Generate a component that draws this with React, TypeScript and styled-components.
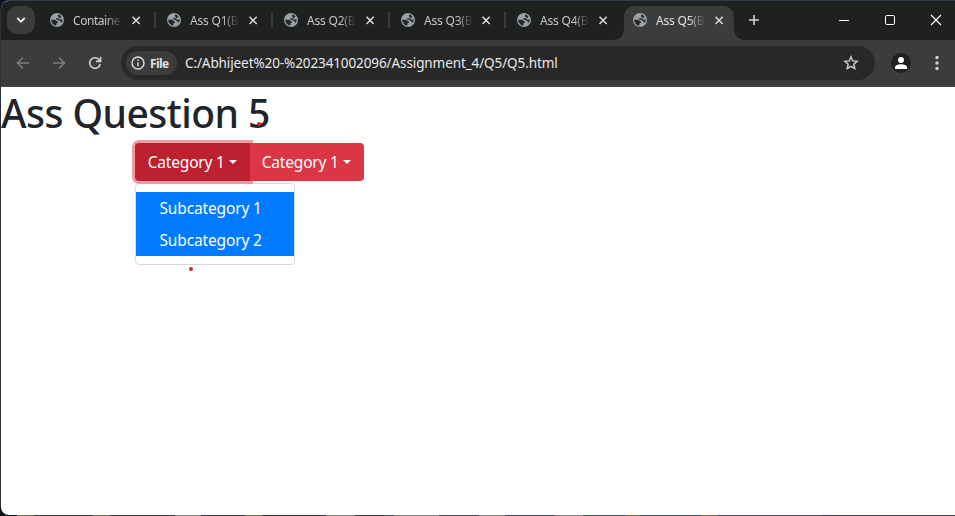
import React from "react";
import styled, { createGlobalStyle, css } from "styled-components";

const Global = createGlobalStyle`
  * { box-sizing: border-box; }
  html, body { margin: 0; padding: 0; overflow: hidden; }
  body { font-family: "Open Sans", "Noto Sans", sans-serif; }
  svg { display: block; flex: none; }
`;

const Desktop = styled.div`
  width: 955px;
  height: 516px;
  padding: 0 0 1px 1px;
  display: flex;
  background:
    linear-gradient(90deg,
      #101624 0 17px, #737033 17px 34px, #353743 34px 93px, #737033 93px 110px,
      #353743 110px 175px, #858585 175px 201px, #353743 201px 245px, #7c7037 245px 262px,
      #35333f 262px 326px, #85817f 326px 355px, #3a343c 355px 384px, #394d82 384px 394px,
      #85817f 394px 439px, #3b4582 439px 479px, #85817f 479px 505px, #3c4180 505px 555px,
      #85817f 555px 583px, #3b5084 583px 625px, #7c7037 625px 640px, #3f4d80 640px 701px,
      #7c7037 701px 718px, #424d84 718px 822px, #30397c 822px) 0 515px / 955px 1px no-repeat,
    linear-gradient(#0b1424 0 8px, #2b2e3b 8px 507px, #0c111d 507px);
`;

const Window = styled.div`
  flex: 1;
  display: flex;
  flex-direction: column;
  overflow: hidden;
  border-top: 1px solid #303c4c;
  border-radius: 8px 0 0 8px;
  background: #fff;
`;

const TabStrip = styled.div`
  flex: none;
  height: 39px;
  display: flex;
  background: #1f2120;
`;

const TabSearch = styled.div`
  width: 28px;
  height: 28px;
  margin: 5px 4px 0 6px;
  border-radius: 10px;
  background: #3c3c3c;
  display: grid;
  place-items: center;
`;

const Tab = styled.div<{ $active?: boolean; $wide?: boolean }>`
  position: relative;
  width: ${(p) => (p.$wide ? 117 : 116)}px;
  height: 34px;
  margin-top: 5px;
  padding: 0 0 6px 11px;
  display: flex;
  align-items: center;
  color: #c7c7c7;
  ${(p) =>
    p.$active &&
    css`
      width: 110px;
      margin-left: 2px;
      padding-left: 9px;
      background: #3c3c3c;
      border-radius: 10px 10px 0 0;
      color: #e3e3e3;
      &::before,
      &::after {
        content: "";
        position: absolute;
        bottom: 0;
        width: 10px;
        height: 10px;
      }
      &::before {
        left: -10px;
        background: radial-gradient(circle at 0 0, transparent 9.5px, #3c3c3c 10px);
      }
      &::after {
        right: -10px;
        background: radial-gradient(circle at 100% 0, transparent 9.5px, #3c3c3c 10px);
      }
    `}
`;

const TabTitle = styled.div<{ $tight?: boolean }>`
  width: 50px;
  margin: 1px 9px 0 9px;
  white-space: nowrap;
  font-family: "Noto Sans", "Open Sans", sans-serif;
  font-size: 12px;
  line-height: 18px;
  letter-spacing: ${(p) => (p.$tight ? "-0.45px" : "-0.2px")};
  mask-image: linear-gradient(90deg, #000 33px, transparent 49px);
`;

const Separator = styled.div`
  width: 2px;
  height: 16px;
  margin-left: 13px;
  background: #3a3b3b;
`;

const NewTab = styled.div`
  margin: 13px 0 0 14px;
`;

const WindowControls = styled.div`
  margin: 13px 13px 0 auto;
  display: flex;
  gap: 34px;
`;

const Toolbar = styled.div`
  flex: none;
  height: 47px;
  display: flex;
  align-items: center;
  padding-left: 14px;
  background: #3c3c3c;
  border-bottom: 1px solid #474747;
`;

const NavIcons = styled.div`
  display: flex;
  gap: 20px;
  width: 106px;
`;

const AddressBar = styled.div`
  width: 754px;
  height: 34px;
  border-radius: 17px;
  background: #282828;
  display: flex;
  align-items: center;
  padding: 0 16px 0 5px;
`;

const FileChip = styled.div`
  width: 51px;
  height: 24px;
  border-radius: 12px;
  background: #3c3c3c;
  display: flex;
  align-items: center;
  gap: 5px;
  padding-left: 5px;
  color: #e3e3e3;
  font-size: 12px;
  font-weight: 700;
  letter-spacing: -0.6px;
`;

const Url = styled.div`
  margin: -1px 0 0 8px;
  flex: 1;
  color: #e8e8e8;
  font-family: "Noto Sans", "Open Sans", sans-serif;
  font-size: 13.5px;
  letter-spacing: -0.1px;
  white-space: nowrap;
`;

const Avatar = styled.div`
  width: 20px;
  height: 20px;
  margin: 0 24px 0 16px;
  border-radius: 50%;
  background: #1f2120;
  overflow: hidden;
`;

const Page = styled.main`
  position: relative;
  flex: 1;
  color: #212529;
`;

const Heading = styled.h1`
  margin: 0;
  height: 56px;
  font-family: "Noto Sans", "Open Sans", sans-serif;
  font-size: 39px;
  line-height: 48px;
  padding-top: 2px;
  font-weight: 500;
  letter-spacing: -0.52px;
  white-space: nowrap;
`;

const ButtonGroup = styled.div`
  display: flex;
  margin-left: 134px;
`;

const DropButton = styled.button<{ $open?: boolean }>`
  position: relative;
  z-index: ${(p) => (p.$open ? 0 : 1)};
  width: ${(p) => (p.$open ? 115 : 114)}px;
  height: 38px;
  padding: 0 0 0 ${(p) => (p.$open ? 12.5 : 11.5)}px;
  border: 0;
  border-radius: ${(p) => (p.$open ? "4px 0 0 4px" : "0 4px 4px 0")};
  background: ${(p) => (p.$open ? "#bd2130" : "#dc3545")};
  box-shadow: ${(p) => (p.$open ? "0 0 0 3px #ee9aa2" : "none")};
  color: #fff;
  font: 400 15.5px/24px "Noto Sans", "Open Sans", sans-serif;
  letter-spacing: -0.2px;
  white-space: nowrap;
  display: flex;
  align-items: center;
`;

const Label = styled.span`
  width: 77.5px;
`;

const Caret = styled.span`
  margin-left: 4px;
  border: 4.8px solid transparent;
  border-top-color: #fff;
  border-bottom: 0;
`;

const Menu = styled.div`
  width: 160px;
  height: 82px;
  margin: 2px 0 0 134px;
  padding: 8px 0;
  border: 1px solid #d9d9d9;
  border-radius: 4px;
  background: #fff;
`;

const MenuItem = styled.div`
  height: 32px;
  padding: 4px 23.5px;
  background: #007bff;
  color: #fff;
  font-family: "Noto Sans", "Open Sans", sans-serif;
  font-size: 15.5px;
  line-height: 24px;
  letter-spacing: -0.15px;
  white-space: nowrap;
`;

const Dot = styled.span<{ $x: number; $y: number }>`
  position: absolute;
  left: ${(p) => p.$x}px;
  top: ${(p) => p.$y}px;
  width: 4px;
  height: 4px;
  border-radius: 50%;
  background: #e51c23;
`;

const Globe = () => (
  <svg width="14" height="14" viewBox="0 0 14 14">
    <circle cx="7" cy="7" r="7" fill="#9aa0a6" />
    <path
      d="M8.1 1.5c1.5.2 2.5.9 3.3 1.9-.5.8-1.2 1.8-2.2 1.5C7.8 4.6 9 3.3 8 2.9zM1.2 6.8h3.4c1.6 0 1.7 1.7 3.1 1.7.9.1.4 1.4-.5 1.5-1.1.1-.7 1.2-.8 2.7C3.6 12.4 1.3 9.9 1.2 6.8zM6 5.2h2.4c.9 0 .8 1.2 1.8 1.3h2.4c.1 1.3-.2 2.3-.8 3.2-.9-.1-1.2-.7-1.2-1.5-1.5 0-1.5-1.4-2.6-1.4C6.8 6.8 5.5 6.2 6 5.2z"
      fill="#24282a"
    />
  </svg>
);

const Close = () => (
  <svg width="9" height="9" viewBox="0 0 9 9" stroke="#dedede" strokeWidth="1.5">
    <path d="M.5 .8l7.2 7.2M7.7 .8L.5 8" />
  </svg>
);

const Arrow = ({ back = false }: { back?: boolean }) => (
  <svg width="16" height="16" viewBox="0 0 16 16" fill="none" stroke="#7e7e7e" strokeWidth="1.5">
    {back ? <path d="M14 8H3M8 2.5L2.5 8 8 13.5" /> : <path d="M2 8h11M8 2.5L13.5 8 8 13.5" />}
  </svg>
);

const titles = ["Containe", "Ass Q1(B", "Ass Q2(B", "Ass Q3(B", "Ass Q4(B", "Ass Q5(B"];

export default function App() {
  return (
    <>
      <Global />
      <Desktop>
        <Window>
          <TabStrip>
            <TabSearch>
              <svg width="10" height="8" viewBox="0 0 10 8" fill="none" stroke="#f0f0f0" strokeWidth="1.8">
                <path d="M1.3 2L5 5.7 8.7 2" />
              </svg>
            </TabSearch>
            {titles.map((title, i) => (
              <Tab key={title} $active={i === 5} $wide={i < 3}>
                <Globe />
                <TabTitle $tight={i === 0}>{title}</TabTitle>
                <Close />
                {i < 4 && <Separator />}
              </Tab>
            ))}
            <NewTab>
              <svg width="12" height="12" viewBox="0 0 12 12" stroke="#d0d0d0" strokeWidth="1.6">
                <path d="M6 1v10M1 6h10" />
              </svg>
            </NewTab>
            <WindowControls>
              <svg width="12" height="12" viewBox="0 0 12 12" stroke="#fff">
                <path d="M1 6.5h10" />
              </svg>
              <svg width="12" height="12" viewBox="0 0 12 12" fill="none" stroke="#fff">
                <rect x="1.5" y="1.5" width="9" height="9" rx="1.3" />
              </svg>
              <svg width="12" height="12" viewBox="0 0 12 12" stroke="#fff" strokeWidth="1.1">
                <path d="M1 1l10 10M11 1L1 11" />
              </svg>
            </WindowControls>
          </TabStrip>
          <Toolbar>
            <NavIcons>
              <Arrow back />
              <Arrow />
              <svg width="16" height="16" viewBox="0 0 16 16" fill="none" stroke="#d0d0d0" strokeWidth="1.6">
                <path d="M13.2 9A5.3 5.3 0 1 1 12 4.5L13.3 6M13.6 1.8v4.6H9" />
              </svg>
            </NavIcons>
            <AddressBar>
              <FileChip>
                <svg width="14" height="14" viewBox="0 0 14 14" fill="none" stroke="#dcdcdc" strokeWidth="1.4">
                  <circle cx="7" cy="7" r="6" />
                  <path d="M7 6.2v4M7 3.6v1.5" />
                </svg>
                File
              </FileChip>
              <Url>C:/Abhijeet%20-%202341002096/Assignment_4/Q5/Q5.html</Url>
              <svg width="16" height="16" viewBox="0 0 16 16" fill="none" stroke="#cfcfcf" strokeWidth="1.4">
                <path d="M8 1.8l1.7 4.1 4.5.4-3.4 2.9 1 4.4L8 11.3l-3.8 2.3 1-4.4-3.4-2.9 4.5-.4z" />
              </svg>
            </AddressBar>
            <Avatar>
              <svg width="20" height="20" viewBox="0 0 20 20" fill="#fff">
                <circle cx="10" cy="7" r="3" />
                <path d="M4 16v-1.7C4 12.4 7 11.3 10 11.3s6 1.1 6 3V16z" />
              </svg>
            </Avatar>
            <svg width="4" height="16" viewBox="-1 0 4 16" fill="#cfcfcf">
              <circle cx="1" cy="2.5" r="1.7" />
              <circle cx="1" cy="8" r="1.7" />
              <circle cx="1" cy="13.5" r="1.7" />
            </svg>
          </Toolbar>
          <Page>
            <Heading>Ass Question 5</Heading>
            <ButtonGroup>
              <DropButton $open>
                <Label>Category 1</Label>
                <Caret />
              </DropButton>
              <DropButton>
                <Label>Category 1</Label>
                <Caret />
              </DropButton>
            </ButtonGroup>
            <Menu>
              <MenuItem>Subcategory 1</MenuItem>
              <MenuItem>Subcategory 2</MenuItem>
            </Menu>
            <Dot $x={256} $y={35} />
            <Dot $x={188} $y={180} />
          </Page>
        </Window>
      </Desktop>
    </>
  );
}
